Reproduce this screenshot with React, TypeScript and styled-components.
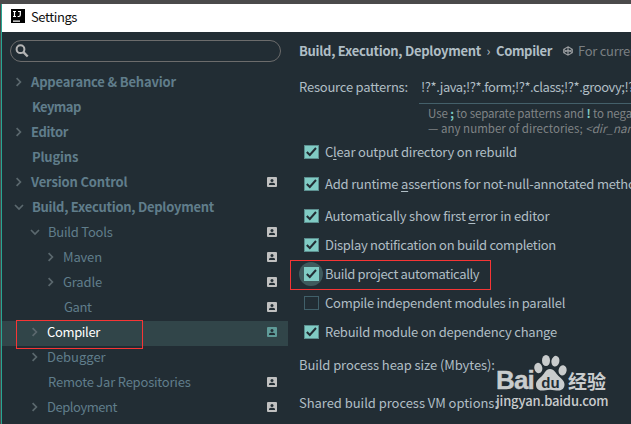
import React from 'react';
import styled, { createGlobalStyle, css } from 'styled-components';

const GlobalStyle = createGlobalStyle`
  *, *::before, *::after { box-sizing: border-box; }
  body {
    margin: 0;
    overflow: hidden;
    background: #222d34;
    font-family: "Noto Sans CJK SC", "Noto Sans", sans-serif;
    font-size: 13px;
  }
`;

const Screen = styled.div`
  position: relative;
  width: 631px;
  height: 424px;
  overflow: hidden;
  padding: 4px 0 0 1px;
  background: #4b4a4b;
`;

const Dialog = styled.div`
  display: flex;
  flex-direction: column;
  height: 420px;
  border-left: 1px solid #26a693;
  background: #222d34;
`;

const TitleBar = styled.header`
  display: flex;
  align-items: center;
  flex: none;
  height: 28px;
  padding: 0 0 4px 9px;
  gap: 6px;
  background: #fff;
  color: #111;
`;

const Text = styled.span<{ $track?: number }>`
  white-space: pre;
  letter-spacing: ${(p) => p.$track ?? 0}px;
`;

const Body = styled.div`
  display: flex;
  flex: 1;
  min-height: 0;
`;

const Sidebar = styled.aside`
  flex: none;
  width: 286px;
  padding-top: 8px;
`;

const SearchField = styled.div`
  display: flex;
  align-items: center;
  width: 271px;
  height: 22px;
  margin: 0 0 9px 8px;
  padding-left: 4px;
  border: 1px solid #6c6c6c;
  border-radius: 11px;
`;

const Row = styled.div<{ $indent: number; $bold?: boolean; $selected?: boolean }>`
  display: flex;
  align-items: center;
  height: 25px;
  padding: 0 11px 3px ${(p) => p.$indent}px;
  line-height: 24px;
  color: ${(p) => (p.$selected ? '#fff' : '#607d8b')};
  font-weight: ${(p) => (p.$bold ? 700 : 400)};
  ${(p) => p.$selected && css`background: #314549;`}
`;

const RowLabel = styled(Text)`
  flex: 1;
  height: 24px;
`;

const ArrowSlot = styled.span<{ $width: number }>`
  display: flex;
  flex: none;
  width: ${(p) => p.$width}px;
`;

const Content = styled.main`
  flex: 1;
  min-width: 0;
  overflow: hidden;
  padding-left: 11px;
  color: #b0bec5;
  white-space: nowrap;
`;

const Crumbs = styled.div`
  display: flex;
  align-items: center;
  height: 20px;
  margin-top: 9px;
  font-weight: 700;
  line-height: 20px;
`;

const CrumbSeparator = styled.span`
  flex: none;
  width: 15px;
  text-align: center;
  font-weight: 400;
`;

const ScopeNote = styled.div`
  display: flex;
  align-items: center;
  flex: none;
  gap: 5px;
  margin-left: 11px;
  color: #7a7f82;
  font-weight: 400;
`;

const Patterns = styled.div`
  display: grid;
  grid-template-columns: 120px 1fr;
  margin-top: 11px;
`;

const PatternLabel = styled(Text)`
  line-height: 30px;
`;

const PatternInput = styled.div`
  height: 32px;
  padding-left: 2px;
  border-bottom: 1px solid #44606a;
  line-height: 30px;
`;

const Hint = styled.div`
  grid-column: 2;
  padding: 2px 0 0 9px;
  color: #808486;
  font-size: 11.5px;
  line-height: 15px;

  b { color: #80cbc4; }
`;

const Options = styled.div`
  display: flex;
  flex-direction: column;
  margin-top: 2px;
`;

const Option = styled.label<{ $gap: number }>`
  display: flex;
  align-items: center;
  height: 28px;
  margin-bottom: ${(p) => p.$gap}px;
  padding-left: 5px;
  gap: 6px;
  line-height: 20px;

  u { text-underline-offset: 2px; }
`;

const Box = styled.span<{ $checked: boolean; $focused?: boolean }>`
  display: flex;
  flex: none;
  width: 15px;
  height: 14px;
  border: 1px solid ${(p) => (p.$checked ? '#5c8f8f' : '#41606a')};
  background: ${(p) => (p.$checked ? '#80cbc4' : 'transparent')};
  ${(p) =>
    p.$focused &&
    css`
      position: relative;
      border-color: #80cbc4;
      &::before {
        content: '';
        position: absolute;
        z-index: 0;
        inset: -6px -5px -6px -6px;
        border-radius: 50%;
        background: #3f5a5d;
      }
      &::after {
        content: '';
        position: absolute;
        inset: -1px;
        background: #80cbc4;
      }
    `}

  svg { position: relative; z-index: 1; }
`;

const Field = styled.div<{ $gap: number }>`
  height: 20px;
  margin-top: ${(p) => p.$gap}px;
  line-height: 20px;
`;

const Highlight = styled.div<{ $x: number; $y: number; $w: number; $h: number }>`
  position: absolute;
  left: ${(p) => p.$x}px;
  top: ${(p) => p.$y}px;
  width: ${(p) => p.$w}px;
  height: ${(p) => p.$h}px;
  border: 1px solid #f73535;
`;

const Watermark = styled.div`
  position: absolute;
  left: 496px;
  top: 353px;
  display: flex;
  flex-direction: column;
  color: #c9cccd;
`;

const WatermarkLogo = styled.div`
  display: flex;
  align-items: flex-end;
  height: 38px;
`;

const Bai = styled.span`
  width: 38px;
  font: 700 26px/22px "Liberation Sans", sans-serif;
  letter-spacing: -0.9px;
  -webkit-text-stroke: 0.4px #c9cccd;
`;

const Jingyan = styled.span`
  margin-left: 1px;
  font-size: 19px;
  font-weight: 700;
  line-height: 21px;
`;

const WatermarkUrl = styled(Text)`
  height: 20px;
  font-weight: 500;
  line-height: 19px;
`;

const IdeaLogo = () => (
  <svg width="14" height="14" viewBox="0 0 14 14">
    <rect width="14" height="14" fill="#000" />
    <path d="M2 2.5h3M3.5 2.5v5M2 7.5h3M7 2.5h3M9.3 2.5v3.6q0 1.4-1.4 1.4H6.6M2 12.2h7" fill="none" stroke="#fff" strokeWidth="1.2" />
  </svg>
);

const SearchIcon = () => (
  <svg width="14" height="14" viewBox="0 0 14 14" fill="none" stroke="#b4b4b4">
    <circle cx="5.5" cy="5.2" r="3.9" strokeWidth="2" />
    <path d="M8.4 8.2l4.3 4.3" strokeWidth="2.4" />
  </svg>
);

const Arrow = ({ open }: { open?: boolean }) => (
  <svg width="10" height="10" viewBox="0 0 10 10" fill="none" stroke="#5b686e" strokeWidth="1.7">
    <path d={open ? 'M1 3l4 4 4-4' : 'M2.6 1.2L6.4 5 2.6 8.8'} />
  </svg>
);

const ProjectIcon = ({ color }: { color: string }) => (
  <svg width="10" height="10" viewBox="0 0 10 10">
    <rect width="10" height="10" rx="1" fill={color} />
    <circle cx="5" cy="3.5" r="1.5" fill="#222d34" />
    <path d="M2 8V7q0-1.3 3-1.3T8 7v1z" fill="#222d34" />
  </svg>
);

const CheckMark = () => (
  <svg width="13" height="12" viewBox="0 0 13 12" fill="none" stroke="#222d34" strokeWidth="2">
    <path d="M1.8 6l3 3L11 2" />
  </svg>
);

const ScopeIcon = () => (
  <svg width="10" height="10" viewBox="0 0 10 10" fill="none" stroke="#9a9da0" strokeWidth="1.1">
    <path d="M5 .8L9.3 3.2v3.6L5 9.2.7 6.8V3.2zM.7 3.4L5 6l4.3-2.6M.7 6.6L5 4l4.3 2.6M5 1v8" />
  </svg>
);

const Paw = () => (
  <svg width="33" height="37" viewBox="0 0 33 37" fill="#c9cccd">
    <ellipse cx="4.3" cy="14" rx="4" ry="5.2" transform="rotate(-12 4.3 14)" />
    <ellipse cx="12" cy="6.5" rx="4" ry="5.6" />
    <ellipse cx="21.4" cy="7.2" rx="4" ry="5.4" transform="rotate(12 21.4 7.2)" />
    <ellipse cx="28.6" cy="16.4" rx="4" ry="5.2" transform="rotate(10 28.6 16.4)" />
    <path d="M16 15c4.500 0 5.500 4 8.500 7s6 4.800 6 8.500-2.500 6-6 6c-3 0-5-.8-8.500-.8s-5.500.8-8.500.8c-3.500 0-5.500-2.500-5.500-6s3-5.500 6-8.500 3.500-7 8-7z" />
    <text x="16.500" y="33.500" textAnchor="middle" fill="#222d34" fontFamily="Liberation Sans, sans-serif" fontWeight="700" fontSize="15">du</text>
  </svg>
);

type TreeItem = {
  label: string;
  indent: number;
  slot: number;
  track: number;
  arrow?: 'open' | 'closed';
  bold?: boolean;
  icon?: boolean;
  selected?: boolean;
};

const tree: TreeItem[] = [
  { label: 'Appearance & Behavior', indent: 12, slot: 17, track: -0.17, arrow: 'closed', bold: true },
  { label: 'Keymap', indent: 12, slot: 18, track: -0.6, bold: true },
  { label: 'Editor', indent: 12, slot: 17, track: -0.36, arrow: 'closed', bold: true },
  { label: 'Plugins', indent: 12, slot: 18, track: -0.2, bold: true },
  { label: 'Version Control', indent: 12, slot: 17, track: -0.16, arrow: 'closed', bold: true, icon: true },
  { label: 'Build, Execution, Deployment', indent: 12, slot: 18, track: -0.27, arrow: 'open', bold: true },
  { label: 'Build Tools', indent: 28, slot: 18, track: -0.22, arrow: 'open', icon: true },
  { label: 'Maven', indent: 44, slot: 17, track: -0.16, arrow: 'closed', icon: true },
  { label: 'Gradle', indent: 44, slot: 17, track: -0.16, arrow: 'closed', icon: true },
  { label: 'Gant', indent: 44, slot: 18, track: -0.4, icon: true },
  { label: 'Compiler', indent: 28, slot: 17, track: -0.35, arrow: 'closed', icon: true, selected: true },
  { label: 'Debugger', indent: 28, slot: 17, track: -0.02, arrow: 'closed' },
  { label: 'Remote Jar Repositories', indent: 28, slot: 18, track: -0.21, icon: true },
  { label: 'Deployment', indent: 28, slot: 17, track: -0.46, arrow: 'closed', icon: true },
];

type OptionItem = {
  label: React.ReactNode;
  track: number;
  gap: number;
  checked: boolean;
  focused?: boolean;
};

const options: OptionItem[] = [
  { label: <>C<u>l</u>ear output directory on rebuild</>, track: -0.21, gap: 4, checked: true },
  { label: <>Add runtime <u>a</u>ssertions for not-null-annotated methods</>, track: -0.2, gap: 4, checked: true },
  { label: <>Automatically show first <u>e</u>rror in editor</>, track: -0.2, gap: 1, checked: true },
  { label: 'Display notification on build completion', track: -0.28, gap: 1, checked: true },
  { label: 'Build project automatically', track: -0.36, gap: 1, checked: true, focused: true },
  { label: 'Compile independent modules in parallel', track: -0.26, gap: 1, checked: false },
  { label: 'Rebuild module on dependency change', track: -0.23, gap: 1, checked: true },
];

export default function App() {
  return (
    <Screen>
      <GlobalStyle />
      <Dialog>
        <TitleBar>
          <IdeaLogo />
          <Text $track={-0.4}>Settings</Text>
        </TitleBar>
        <Body>
          <Sidebar>
            <SearchField>
              <SearchIcon />
            </SearchField>
            {tree.map((item) => (
              <Row key={item.label} $indent={item.indent} $bold={item.bold} $selected={item.selected}>
                <ArrowSlot $width={item.slot}>{item.arrow && <Arrow open={item.arrow === 'open'} />}</ArrowSlot>
                <RowLabel $track={item.track}>{item.label}</RowLabel>
                {item.icon && <ProjectIcon color={item.selected ? '#5f9b98' : '#c0c0c0'} />}
              </Row>
            ))}
          </Sidebar>
          <Content>
            <Crumbs>
              <Text $track={-0.27}>Build, Execution, Deployment</Text>
              <CrumbSeparator>›</CrumbSeparator>
              <Text $track={-0.35}>Compiler</Text>
              <ScopeNote>
                <ScopeIcon />
                <Text $track={-0.28}>For current</Text>
              </ScopeNote>
            </Crumbs>
            <Patterns>
              <PatternLabel $track={-0.21}>Resource patterns:</PatternLabel>
              <PatternInput>
                <Text $track={-0.42}>!?*.java;!?*.form;!?*.class;!?*.groovy;!?*</Text>
              </PatternInput>
              <Hint>
                <Text $track={-0.11}>Use <b>;</b> to separate patterns and <b>!</b> to negate</Text>
                <br />
                <Text $track={0.03}>— any number of directories; <i>&lt;dir_name&gt;</i></Text>
              </Hint>
            </Patterns>
            <Options>
              {options.map((option, i) => (
                <Option key={i} $gap={option.gap}>
                  <Box $checked={option.checked} $focused={option.focused}>
                    {option.checked && <CheckMark />}
                  </Box>
                  <Text $track={option.track}>{option.label}</Text>
                </Option>
              ))}
            </Options>
            <Field $gap={8}>
              <Text $track={-0.09}>Build process heap size (Mbytes):</Text>
            </Field>
            <Field $gap={18}>
              <Text $track={-0.04}>Shared build process VM options:</Text>
            </Field>
          </Content>
        </Body>
      </Dialog>
      <Highlight $x={16} $y={320} $w={127} $h={29} />
      <Highlight $x={290} $y={260} $w={201} $h={30} />
      <Watermark>
        <WatermarkLogo>
          <Bai>Bai</Bai>
          <Paw />
          <Jingyan>经验</Jingyan>
        </WatermarkLogo>
        <WatermarkUrl $track={-0.17}>jingyan.baidu.com</WatermarkUrl>
      </Watermark>
    </Screen>
  );
}
